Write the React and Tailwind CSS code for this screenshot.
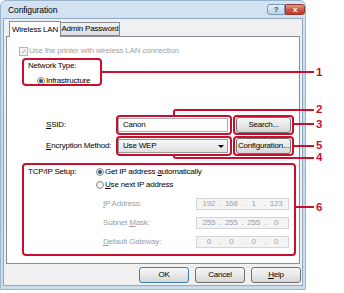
import React from "react";

function Radio({ checked }) {
  return (
    <span className="relative inline-flex w-[8px] h-[8px] rounded-full border border-[#8a8a8a] bg-gradient-to-br from-[#e6e6e6] to-[#ffffff] items-center justify-center shrink-0">
      {checked && <span className="w-[4px] h-[4px] rounded-full bg-[#2a5a7a]" />}
    </span>
  );
}

function WinButton({ children, w = "w-[50px]", def = false }) {
  return (
    <div
      className={`${w} h-[16px] flex items-center justify-center rounded-[3px] border ${
        def ? "border-[#3c7fb1]" : "border-[#707070]"
      } bg-gradient-to-b from-[#f6f6f6] via-[#e8e8e8] to-[#d6d6d6] text-[8px] text-black`}
    >
      {children}
    </div>
  );
}

function IpField({ vals }) {
  return (
    <div className="w-[93px] h-[12px] border border-[#d5d5d5] bg-[#f4f4f4] flex items-center px-[2px] text-[#a0a0a0]">
      {vals.map((v, i) => (
        <React.Fragment key={i}>
          <span className="w-[20px] text-center">{v}</span>
          {i < 3 && <span className="w-[3px] text-center">.</span>}
        </React.Fragment>
      ))}
    </div>
  );
}

function RedBox({ cls }) {
  return <div className={`absolute border-2 border-[#c8102e] rounded-[4px] ${cls}`} />;
}

function Num({ n, cls }) {
  return (
    <div className={`absolute left-[316px] h-[9px] text-[11.5px] font-bold leading-[9px] text-[#c8102e] ${cls}`}>
      {n}
    </div>
  );
}

export default function App() {
  return (
    <div className="relative w-[344px] h-[293px] bg-white overflow-hidden font-['Liberation_Sans',Arial,sans-serif] text-[8px] tracking-[-0.2px] leading-none">
      {/* window */}
      <div className="w-[306px] h-[290px] flex flex-col rounded-t-[6px] border border-[#9db4cd] bg-gradient-to-b from-[#d3e3f3] via-[#c4d8ee] to-[#cbdcef]">
        {/* title bar */}
        <div className="h-[17px] flex items-start justify-between shrink-0">
          <div className="ml-[7px] mt-[5px] text-[8.5px] tracking-[-0.1px] text-black">Configuration</div>
          <div className="flex mt-[3px] mr-0">
            <div className="w-[18px] h-[11px] rounded-l-[3px] border border-[#7a98bb] bg-gradient-to-b from-[#e6eff9] to-[#bcd0e8] flex items-center justify-center text-[8px] font-bold text-[#2c4a6e]">
              ?
            </div>
            <div className="w-[20px] h-[11px] rounded-r-[3px] border border-[#8f3a2e] bg-gradient-to-b from-[#e4998c] via-[#cf5a47] to-[#c0392b] flex items-center justify-center text-[8px] font-bold text-white">
              x
            </div>
          </div>
        </div>
        {/* content */}
        <div className="mx-[2px] h-[268px] border border-[#8fa7c2] bg-[#f0f0f0] flex flex-col">
          {/* tabs */}
          <div className="h-[17px] flex items-end pl-[5px] shrink-0">
            <div className="relative z-10 w-[52px] h-[16px] -mb-px border border-b-0 border-[#898c95] bg-white flex items-center justify-center text-black">
              Wireless LAN
            </div>
            <div className="w-[59px] h-[14px] border border-l-0 border-[#898c95] bg-gradient-to-b from-[#f2f2f2] to-[#dcdcdc] flex items-center justify-center text-black">
              Admin Password
            </div>
          </div>
          {/* panel */}
          <div className="mx-[2px] h-[228px] border border-[#898c95] bg-white flex flex-col text-black">
            <div className="mt-[9px] h-[10px] flex items-center pl-[12px] gap-[1px] text-[#a4a4a4]">
              <span className="w-[9px] h-[9px] border border-[#b5b5b5] bg-[#f4f4f4] flex items-center justify-center text-[7px] text-[#a8a8a8]">
                ✓
              </span>
              <span>Use the printer with wireless LAN connection</span>
            </div>
            <div className="mt-[5px] h-[10px] flex items-center pl-[21px]">Network Type:</div>
            <div className="mt-[5px] h-[10px] flex items-center pl-[30px] gap-[1px]">
              <Radio checked />
              <span>
                <span className="underline">I</span>nfrastructure
              </span>
            </div>
            {/* SSID */}
            <div className="mt-[32px] h-[14px] flex items-center pl-[39px]">
              <div className="w-[72px]">
                <span className="underline">S</span>SID:
              </div>
              <div className="w-[110px] h-[14px] border border-[#abadb3] bg-white flex items-center pl-[4px]">
                Canon
              </div>
              <div className="ml-[8px]">
                <WinButton w="w-[55px]">Search...</WinButton>
              </div>
            </div>
            {/* Encryption */}
            <div className="mt-[7px] h-[14px] flex items-center pl-[39px]">
              <div className="w-[72px]">
                <span className="underline">E</span>ncryption Method:
              </div>
              <div className="w-[110px] h-[14px] border border-[#9a9a9a] bg-gradient-to-b from-[#f8f8f8] to-[#e2e2e2] flex items-center justify-between pl-[4px] pr-[3px]">
                <span>Use WEP</span>
                <span className="w-0 h-0 border-l-[3px] border-r-[3px] border-t-[3px] border-l-transparent border-r-transparent border-t-black" />
              </div>
              <div className="ml-[8px]">
                <WinButton w="w-[55px]">Configuration...</WinButton>
              </div>
            </div>
            {/* TCP/IP */}
            <div className="mt-[14px] h-[10px] flex items-center pl-[21px]">
              <div className="w-[68px]">TCP/IP Setup:</div>
              <Radio checked />
              <span className="ml-[1px]">
                Get IP address <span className="underline">a</span>utomatically
              </span>
            </div>
            <div className="mt-[3px] h-[10px] flex items-center pl-[89px]">
              <Radio />
              <span className="ml-[1px]">
                <span className="underline">U</span>se next IP address
              </span>
            </div>
            <div className="mt-[8px] h-[12px] flex items-center pl-[96px] text-[#a0a0a0]">
              <div className="w-[93px]">
                <span className="underline">I</span>P Address:
              </div>
              <IpField vals={["192", "168", "1", "123"]} />
            </div>
            <div className="mt-[7px] h-[12px] flex items-center pl-[96px] text-[#a0a0a0]">
              <div className="w-[93px]">
                Subnet <span className="underline">M</span>ask:
              </div>
              <IpField vals={["255", "255", "255", "0"]} />
            </div>
            <div className="mt-[7px] h-[12px] flex items-center pl-[96px] text-[#a0a0a0]">
              <div className="w-[93px]">
                <span className="underline">D</span>efault Gateway:
              </div>
              <IpField vals={["0", "0", "0", "0"]} />
            </div>
          </div>
          {/* buttons */}
          <div className="mt-[3px] flex justify-end gap-[6px] pr-[1px]">
            <WinButton def>OK</WinButton>
            <WinButton>Cancel</WinButton>
            <WinButton>
              <span>
                <span className="underline">H</span>elp
              </span>
            </WinButton>
          </div>
        </div>
      </div>

      {/* annotations */}
      <RedBox cls="left-[22px] top-[58px] w-[80px] h-[28px]" />
      <div className="absolute left-[102px] top-[71px] w-[212px] h-[2px] bg-[#c8102e]" />
      <Num n="1" cls="top-[68px]" />

      <RedBox cls="left-[116px] top-[115px] w-[116px] h-[20px]" />
      <RedBox cls="left-[233px] top-[115px] w-[61px] h-[20px]" />
      <RedBox cls="left-[116px] top-[136px] w-[116px] h-[20px]" />
      <RedBox cls="left-[233px] top-[136px] w-[61px] h-[20px]" />

      <div className="absolute left-[173px] top-[109px] w-[141px] h-[7px] border-l-2 border-t-2 border-[#c8102e] rounded-tl-[3px]" />
      <Num n="2" cls="top-[105px]" />
      <div className="absolute left-[294px] top-[123px] w-[20px] h-[2px] bg-[#c8102e]" />
      <Num n="3" cls="top-[120px]" />
      <div className="absolute left-[294px] top-[145px] w-[20px] h-[2px] bg-[#c8102e]" />
      <Num n="5" cls="top-[141px]" />
      <div className="absolute left-[173px] top-[155px] w-[141px] h-[4px] border-l-2 border-b-2 border-[#c8102e] rounded-bl-[3px]" />
      <Num n="4" cls="top-[153px]" />

      <RedBox cls="left-[22px] top-[163px] w-[274px] h-[93px]" />
      <div className="absolute left-[296px] top-[206px] w-[18px] h-[2px] bg-[#c8102e]" />
      <Num n="6" cls="top-[203px]" />
    </div>
  );
}
